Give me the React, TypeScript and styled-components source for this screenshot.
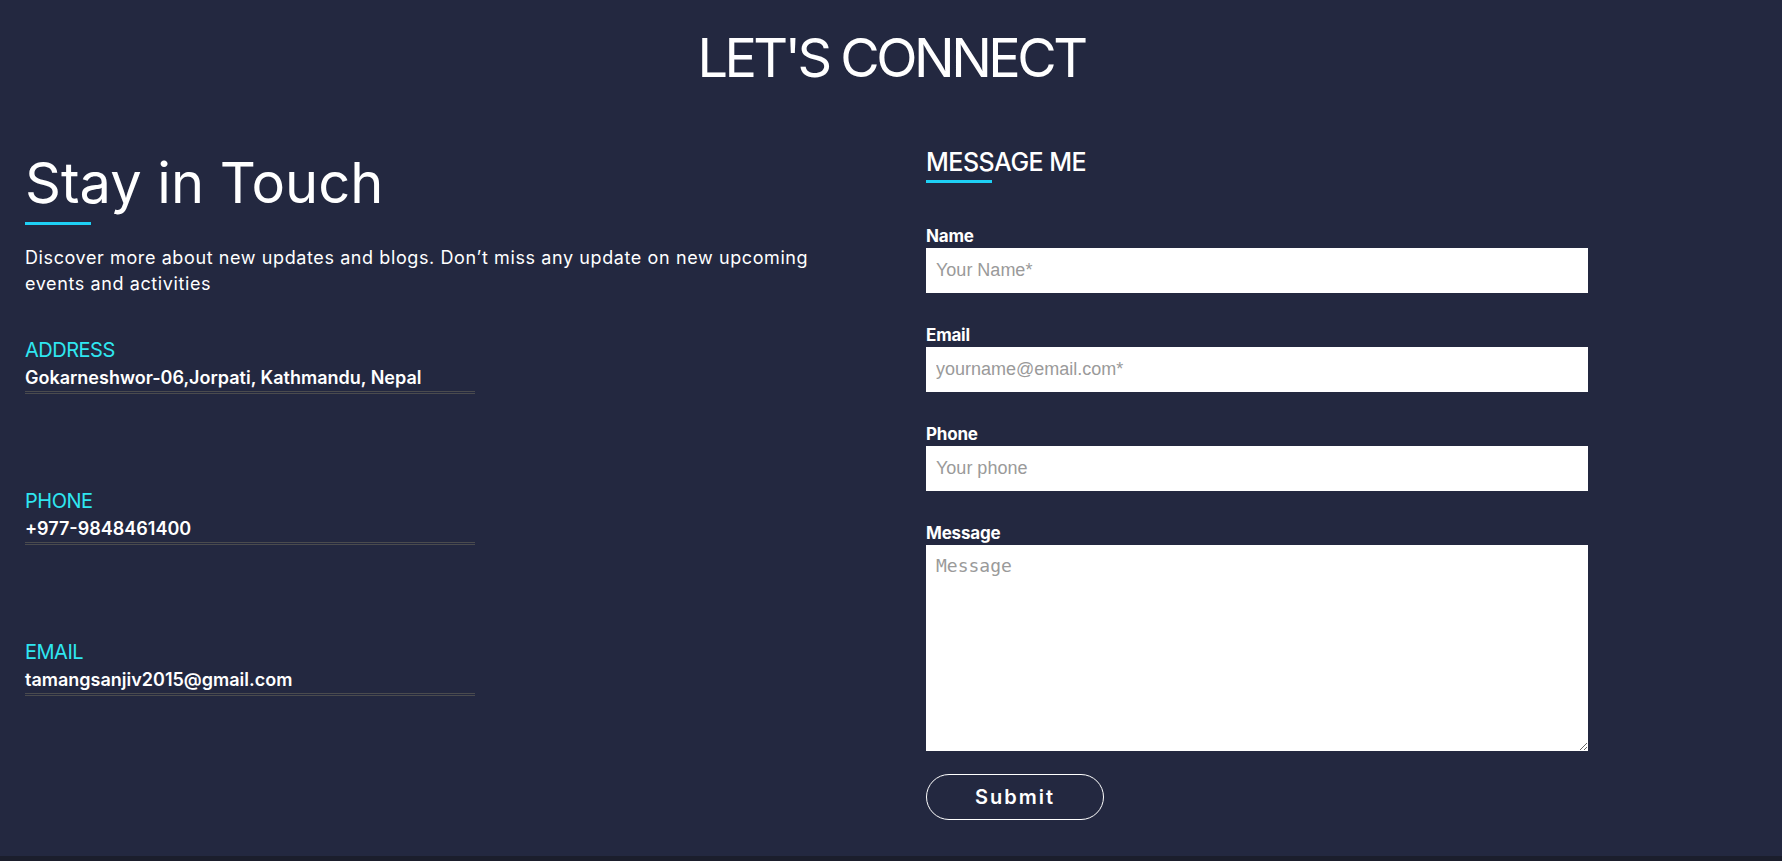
import React from 'react'
import styled, { createGlobalStyle } from 'styled-components'

const GlobalStyle = createGlobalStyle`
  * { box-sizing: border-box; }
  html, body { margin: 0; padding: 0; background: #1b1e2c; }
  body { font-family: Inter, "Open Sans", sans-serif; color: #fff; }
`

const Page = styled.div`
  min-height: 856px;
  background: #232840;
  padding: 26px 25px 0;
`

const Footer = styled.div`
  height: 5px;
  background: #1b1e2c;
`

const Title = styled.h1`
  margin: 0;
  text-align: center;
  font-size: 54px;
  line-height: 64px;
  font-weight: 400;
  letter-spacing: -3.5px;
`

const Columns = styled.div`
  display: flex;
  margin-top: 38px;
`

const Left = styled.section`
  flex: 0 0 901px;
  padding-right: 60px;
`

const Right = styled.section`
  flex: 0 0 662px;
`

const Heading = styled.h2<{ $big?: boolean }>`
  margin: 0;
  font-weight: ${(p) => (p.$big ? 400 : 500)};
  font-size: ${(p) => (p.$big ? '56px' : '25px')};
  line-height: ${(p) => (p.$big ? '64px' : '32px')};
  letter-spacing: ${(p) => (p.$big ? '0' : '-0.5px')};
  margin-top: ${(p) => (p.$big ? '23px' : '18px')};
  &::after {
    content: '';
    display: block;
    width: 66px;
    height: 3px;
    background: #1ed0f5;
    margin-top: ${(p) => (p.$big ? '7px' : '2px')};
  }
`

const Intro = styled.p`
  margin: 20px 0 0;
  max-width: 800px;
  font-size: 18px;
  line-height: 26px;
  letter-spacing: 0.6px;
`

const InfoList = styled.div`
  display: flex;
  flex-direction: column;
  gap: 94px;
  margin-top: 40px;
`

const InfoItem = styled.div`
  width: 450px;
`

const InfoLabel = styled.div`
  color: #2fe6f0;
  font-size: 20px;
  line-height: 26px;
  letter-spacing: -0.5px;
  margin-bottom: 3px;
`

const InfoValue = styled.div`
  font-size: 18px;
  font-weight: 600;
  line-height: 24px;
`

const Rule = styled.hr`
  margin: 1px 0 0;
  height: 3px;
  border: 1px solid #4a4b4e;
  border-left: none;
  border-right: none;
`

const Form = styled.form`
  display: flex;
  flex-direction: column;
  margin-top: 42px;
`

const Field = styled.label`
  display: flex;
  flex-direction: column;
  margin-bottom: 31px;
  &:last-of-type { margin-bottom: 23px; }
`

const FieldName = styled.span`
  font-size: 17px;
  font-weight: 700;
  line-height: 23px;
  letter-spacing: -0.2px;
`

const Input = styled.input`
  height: 45px;
  border: none;
  outline: none;
  padding: 0 10px;
  font-family: "Liberation Sans", Arial, sans-serif;
  font-size: 18px;
  color: #333;
  background: #fff;
  &::placeholder { color: #9a9a9a; }
`

const TextArea = styled.textarea`
  height: 206px;
  border: none;
  outline: none;
  padding: 10px;
  font-family: "DejaVu Sans Mono", "Liberation Mono", monospace;
  font-size: 18px;
  color: #333;
  background: #fff;
  &::placeholder { color: #9a9a9a; }
`

const Submit = styled.button`
  width: 178px;
  height: 46px;
  border: 1px solid #fff;
  border-radius: 23px;
  background: transparent;
  color: #fff;
  font-family: Inter, sans-serif;
  font-size: 20px;
  font-weight: 600;
  letter-spacing: 2px;
  cursor: pointer;
`

const info = [
  { label: 'ADDRESS', value: 'Gokarneshwor-06,Jorpati, Kathmandu, Nepal' },
  { label: 'PHONE', value: '+977-9848461400' },
  { label: 'EMAIL', value: 'tamangsanjiv2015@gmail.com' },
]

const fields = [
  { name: 'Name', placeholder: 'Your Name*', type: 'text' },
  { name: 'Email', placeholder: 'yourname@email.com*', type: 'email' },
  { name: 'Phone', placeholder: 'Your phone', type: 'tel' },
]

export default function App() {
  return (
    <>
      <GlobalStyle />
      <Page>
        <Title>LET'S CONNECT</Title>
        <Columns>
          <Left>
            <Heading $big>Stay in Touch</Heading>
            <Intro>
              Discover more about new updates and blogs. Don’t miss any update on new upcoming
              events and activities
            </Intro>
            <InfoList>
              {info.map((item) => (
                <InfoItem key={item.label}>
                  <InfoLabel>{item.label}</InfoLabel>
                  <InfoValue>{item.value}</InfoValue>
                  <Rule />
                </InfoItem>
              ))}
            </InfoList>
          </Left>
          <Right>
            <Heading>MESSAGE ME</Heading>
            <Form onSubmit={(e) => e.preventDefault()}>
              {fields.map((f) => (
                <Field key={f.name}>
                  <FieldName>{f.name}</FieldName>
                  <Input type={f.type} placeholder={f.placeholder} />
                </Field>
              ))}
              <Field>
                <FieldName>Message</FieldName>
                <TextArea placeholder="Message" />
              </Field>
              <div>
                <Submit type="submit">Submit</Submit>
              </div>
            </Form>
          </Right>
        </Columns>
      </Page>
      <Footer />
    </>
  )
}
